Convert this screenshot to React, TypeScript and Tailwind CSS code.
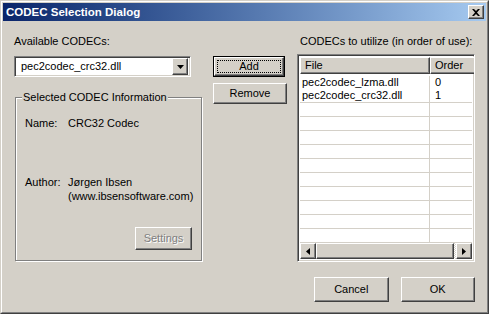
import React from "react";

const raised =
  "border border-t-white border-l-white border-r-[#404040] border-b-[#404040] shadow-[inset_-1px_-1px_0_#808080]";
const sunken =
  "border border-t-[#808080] border-l-[#808080] border-r-white border-b-white shadow-[inset_1px_1px_0_#404040,inset_-1px_-1px_0_#d4d0c8]";

function Button({
  label,
  className = "",
  isDefault = false,
  disabled = false,
}: {
  label: string;
  className?: string;
  isDefault?: boolean;
  disabled?: boolean;
}) {
  if (isDefault) {
    return (
      <div className={`border border-black ${className}`}>
        <div className={`${raised} flex h-full w-full items-center justify-center p-[2px]`}>
          <div className="flex h-full w-full items-center justify-center border border-dotted border-black">
            {label}
          </div>
        </div>
      </div>
    );
  }
  return (
    <div className={`${raised} flex items-center justify-center ${className}`}>
      <span className={disabled ? "text-[#808080] [text-shadow:1px_1px_0_#fff]" : ""}>{label}</span>
    </div>
  );
}

function Arrow({ dir }: { dir: "left" | "right" | "down" }) {
  const pts =
    dir === "left" ? "4,0 4,7 0,3.5" : dir === "right" ? "0,0 0,7 4,3.5" : "0,0 7,0 3.5,4";
  const w = dir === "down" ? 7 : 4;
  const h = dir === "down" ? 4 : 7;
  return (
    <svg width={w} height={h} viewBox={`0 0 ${w} ${h}`}>
      <polygon points={pts} fill="#000" />
    </svg>
  );
}

const files = [
  { file: "pec2codec_lzma.dll", order: "0" },
  { file: "pec2codec_crc32.dll", order: "1" },
];

export default function App() {
  return (
    <div className="h-[314px] w-[489px] border border-t-[#d4d0c8] border-l-[#d4d0c8] border-r-[#404040] border-b-[#404040] bg-[#d4d0c8] font-['Liberation_Sans',Arial,sans-serif] text-[11px] leading-[13px] text-black">
      <div className="flex h-full w-full flex-col border border-t-white border-l-white border-r-[#808080] border-b-[#808080] p-[1px]">
        {/* title bar */}
        <div className="flex h-[18px] items-center bg-gradient-to-r from-[#0a246a] to-[#a6caf0] pl-[3px] pr-[2px]">
          <span className="flex-1 text-[11.5px] font-bold text-white">CODEC Selection Dialog</span>
          <div className={`${raised} flex h-[14px] w-[16px] items-center justify-center bg-[#d4d0c8]`}>
            <svg width="8" height="7" viewBox="0 0 8 7">
              <path d="M0 0h2l2 2 2-2h2L5 3.5 8 7H6L4 5 2 7H0l3-3.5z" fill="#000" />
            </svg>
          </div>
        </div>

        {/* body */}
        <div className="flex flex-1 pl-[11px]">
          {/* left column */}
          <div className="flex w-[188px] flex-col">
            <div className="mt-[14px]">Available CODECs:</div>
            <div className={`${sunken} mt-[8px] flex h-[21px] w-[177px] items-center bg-white p-[2px]`}>
              <span className="flex-1 pl-[4px]">pec2codec_crc32.dll</span>
              <div className={`${raised} flex h-[17px] w-[16px] items-center justify-center bg-[#d4d0c8]`}>
                <Arrow dir="down" />
              </div>
            </div>

            <div className="relative ml-[1px] mt-[20px] flex h-[164px] w-[187px] flex-col border border-[#808080] shadow-[inset_1px_1px_0_#fff,1px_1px_0_#fff]">
              <span className="absolute -top-[7px] left-[6px] bg-[#d4d0c8] px-[1px]">Selected CODEC Information</span>
              <div className="mt-[18px] flex pl-[9px] leading-[14px]">
                <span className="w-[43px]">Name:</span>
                <span>CRC32 Codec</span>
              </div>
              <div className="mt-[45px] flex pl-[9px] leading-[14px]">
                <span className="w-[43px]">Author:</span>
                <span>
                  Jørgen Ibsen
                  <br />
                  (www.ibsensoftware.com)
                </span>
              </div>
              <Button label="Settings" disabled className="mb-[10px] mr-[9px] mt-auto h-[23px] w-[57px] self-end" />
            </div>
          </div>

          {/* middle buttons */}
          <div className="ml-[11px] flex w-[74px] flex-col pt-[35px]">
            <Button label="Add" isDefault className="h-[21px] w-[72px]" />
            <Button label="Remove" className="mt-[6px] h-[21px] w-[74px]" />
          </div>

          {/* right column */}
          <div className="ml-[10px] flex w-[178px] flex-col">
            <div className="ml-[3px] mt-[14px]">CODECs to utilize (in order of use):</div>
            <div className={`${sunken} mt-[6px] flex h-[208px] flex-col overflow-hidden bg-white p-[2px]`}>
              <div className="flex h-[17px] shrink-0">
                <div className={`${raised} flex w-[130px] shrink-0 items-center bg-[#d4d0c8] pl-[4px]`}>File</div>
                <div className={`${raised} flex w-[60px] shrink-0 items-center bg-[#d4d0c8] pl-[4px]`}>Order</div>
              </div>
              <div className="flex flex-1 flex-col overflow-hidden">
                {files.map((f, i) => (
                  <div
                    key={f.file}
                    className={`flex shrink-0 leading-[13px] ${i === 0 ? "h-[15px] pt-[2px]" : "h-[14px] border-b border-[#d4d0c8]"}`}
                  >
                    <span className="w-[130px] shrink-0 border-r border-[#d4d0c8] pl-[2px]">{f.file}</span>
                    <span className="pl-[5px]">{f.order}</span>
                  </div>
                ))}
                {Array.from({ length: 11 }).map((_, i) => (
                  <div key={i} className="flex h-[14px] shrink-0 border-b border-[#d4d0c8]">
                    <span className="w-[130px] shrink-0 border-r border-[#d4d0c8]" />
                  </div>
                ))}
              </div>
              <div className="flex h-[16px] shrink-0">
                <div className={`${raised} flex w-[16px] items-center justify-center bg-[#d4d0c8]`}>
                  <Arrow dir="left" />
                </div>
                <div className={`${raised} w-[138px] bg-[#d4d0c8]`} />
                <div className="flex-1 bg-[repeating-conic-gradient(#fff_0_25%,#d4d0c8_0_50%)] bg-[length:2px_2px]" />
                <div className={`${raised} flex w-[16px] items-center justify-center bg-[#d4d0c8]`}>
                  <Arrow dir="right" />
                </div>
              </div>
            </div>
            <div className="ml-[17px] mt-[15px] flex gap-[12px]">
              <Button label="Cancel" className="h-[25px] w-[75px]" />
              <Button label="OK" className="h-[25px] w-[75px]" />
            </div>
          </div>
        </div>
      </div>
    </div>
  );
}
